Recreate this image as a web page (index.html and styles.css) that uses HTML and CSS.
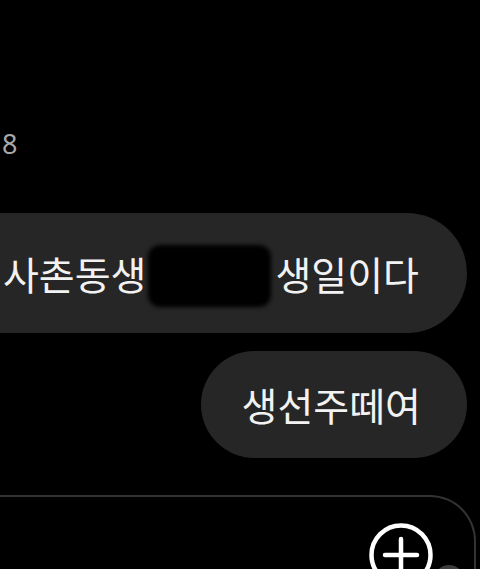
FILE: index.html
```html
<!DOCTYPE html>
<html lang="ko">
<head>
    <meta charset="UTF-8">
    <meta name="viewport" content="width=device-width, initial-scale=1.0">
    <title>메시지</title>
    <link rel="stylesheet" href="styles.css">
</head>
<body>
    <div class="thread">
        <div class="time">8</div>

        <div class="bubble bubble-long">
            <span>사촌동생</span>
            <span class="redact"></span>
            <span>생일이다</span>
        </div>

        <div class="bubble bubble-short">
            <span>생선주떼여</span>
        </div>
    </div>

    <div class="composer">
        <div class="plus">
            <svg width="64" height="64" viewBox="0 0 64 64">
                <circle cx="32" cy="32" r="29.5" fill="none" stroke="#fff" stroke-width="4.5"/>
                <path d="M32 16 V48 M16 32 H48" stroke="#fff" stroke-width="4.5" stroke-linecap="round"/>
            </svg>
        </div>
        <div class="dot"></div>
    </div>
</body>
</html>
```

FILE: styles.css
```css
html, body {
    margin: 0;
    background: #000;
    overflow: hidden;
}
body {
    font-family: 'Noto Sans CJK KR', 'Noto Sans', sans-serif;
    color: #f2f2f2;
    height: 569px;
    display: flex;
    flex-direction: column;
}
.thread {
    display: flex;
    flex-direction: column;
    padding-top: 128px;
}
.time {
    font-family: 'Noto Sans', sans-serif;
    font-size: 27px;
    line-height: 32px;
    color: #a8a8a8;
    padding-left: 2px;
}
.bubble {
    align-self: flex-end;
    margin-right: 13px;
    background: #262626;
    display: flex;
    align-items: center;
    font-size: 39px;
    line-height: 1;
    white-space: nowrap;
}
.bubble-long {
    margin-top: 53px;
    height: 120px;
    border-radius: 60px;
    padding: 0 48px 0 60px;
}
.bubble-short {
    margin-top: 18px;
    height: 107px;
    border-radius: 54px;
    padding: 0 46px 0 41px;
}
.redact {
    display: inline-block;
    width: 123px;
    height: 62px;
    margin: 6px 4px 0 2px;
    background: #000;
    border-radius: 12px;
    filter: blur(2px);
}
.composer {
    position: relative;
    margin-top: 37px;
    margin-left: -10px;
    margin-right: 4px;
    height: 120px;
    border: 2px solid #333;
    border-bottom: none;
    border-left: none;
    border-top-right-radius: 46px;
    display: flex;
    justify-content: flex-end;
    align-items: flex-start;
    padding: 26px 41px 0 0;
}
.plus svg {
    display: block;
}
.dot {
    position: absolute;
    right: 10px;
    top: 68px;
    width: 30px;
    height: 30px;
    border-radius: 50%;
    background: #3c3c3c;
}
```
